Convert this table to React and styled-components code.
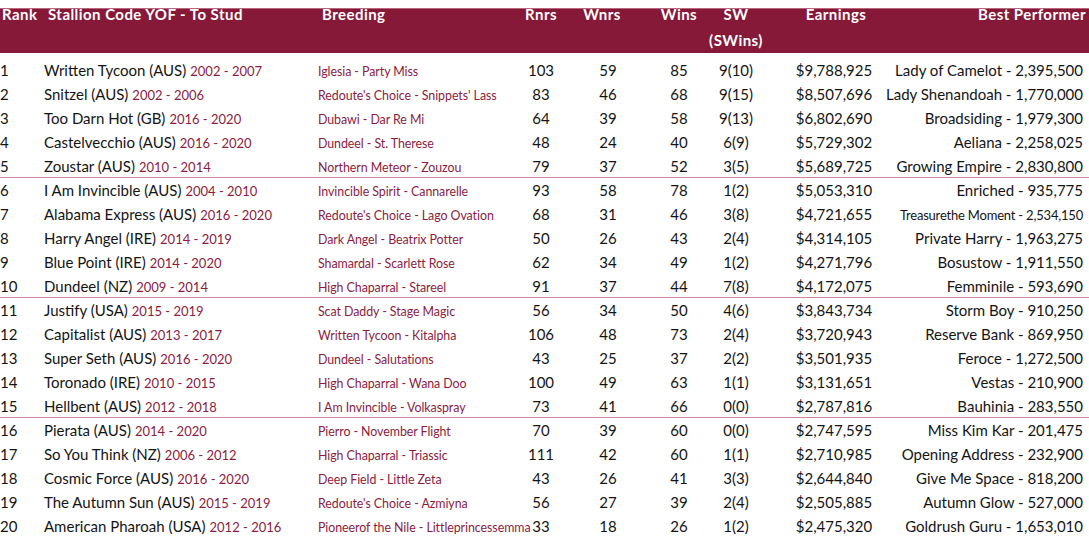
import styled, { createGlobalStyle } from "styled-components";

const GlobalStyle = createGlobalStyle`
  html, body {
    margin: 0;
    padding: 0;
    background: #ffffff;
  }
  body {
    font-family: "Lato", "Liberation Sans", sans-serif;
    color: #141414;
  }
`;

const stallions = [
  ["Written Tycoon (AUS)", "2002 - 2007", "Iglesia - Party Miss", 103, 59, 85, "9(10)", "$9,788,925", "Lady of Camelot - 2,395,500"],
  ["Snitzel (AUS)", "2002 - 2006", "Redoute's Choice - Snippets' Lass", 83, 46, 68, "9(15)", "$8,507,696", "Lady Shenandoah - 1,770,000"],
  ["Too Darn Hot (GB)", "2016 - 2020", "Dubawi - Dar Re Mi", 64, 39, 58, "9(13)", "$6,802,690", "Broadsiding - 1,979,300"],
  ["Castelvecchio (AUS)", "2016 - 2020", "Dundeel - St. Therese", 48, 24, 40, "6(9)", "$5,729,302", "Aeliana - 2,258,025"],
  ["Zoustar (AUS)", "2010 - 2014", "Northern Meteor - Zouzou", 79, 37, 52, "3(5)", "$5,689,725", "Growing Empire - 2,830,800"],
  ["I Am Invincible (AUS)", "2004 - 2010", "Invincible Spirit - Cannarelle", 93, 58, 78, "1(2)", "$5,053,310", "Enriched - 935,775"],
  ["Alabama Express (AUS)", "2016 - 2020", "Redoute's Choice - Lago Ovation", 68, 31, 46, "3(8)", "$4,721,655", "Treasurethe Moment - 2,534,150", true],
  ["Harry Angel (IRE)", "2014 - 2019", "Dark Angel - Beatrix Potter", 50, 26, 43, "2(4)", "$4,314,105", "Private Harry - 1,963,275"],
  ["Blue Point (IRE)", "2014 - 2020", "Shamardal - Scarlett Rose", 62, 34, 49, "1(2)", "$4,271,796", "Bosustow - 1,911,550"],
  ["Dundeel (NZ)", "2009 - 2014", "High Chaparral - Stareel", 91, 37, 44, "7(8)", "$4,172,075", "Femminile - 593,690"],
  ["Justify (USA)", "2015 - 2019", "Scat Daddy - Stage Magic", 56, 34, 50, "4(6)", "$3,843,734", "Storm Boy - 910,250"],
  ["Capitalist (AUS)", "2013 - 2017", "Written Tycoon - Kitalpha", 106, 48, 73, "2(4)", "$3,720,943", "Reserve Bank - 869,950"],
  ["Super Seth (AUS)", "2016 - 2020", "Dundeel - Salutations", 43, 25, 37, "2(2)", "$3,501,935", "Feroce - 1,272,500"],
  ["Toronado (IRE)", "2010 - 2015", "High Chaparral - Wana Doo", 100, 49, 63, "1(1)", "$3,131,651", "Vestas - 210,900"],
  ["Hellbent (AUS)", "2012 - 2018", "I Am Invincible - Volkaspray", 73, 41, 66, "0(0)", "$2,787,816", "Bauhinia - 283,550"],
  ["Pierata (AUS)", "2014 - 2020", "Pierro - November Flight", 70, 39, 60, "0(0)", "$2,747,595", "Miss Kim Kar - 201,475"],
  ["So You Think (NZ)", "2006 - 2012", "High Chaparral - Triassic", 111, 42, 60, "1(1)", "$2,710,985", "Opening Address - 232,900"],
  ["Cosmic Force (AUS)", "2016 - 2020", "Deep Field - Little Zeta", 43, 26, 41, "3(3)", "$2,644,840", "Give Me Space - 818,200"],
  ["The Autumn Sun (AUS)", "2015 - 2019", "Redoute's Choice - Azmiyna", 56, 27, 39, "2(4)", "$2,505,885", "Autumn Glow - 527,000"],
  ["American Pharoah (USA)", "2012 - 2016", "Pioneerof the Nile - Littleprincessemma", 33, 18, 26, "1(2)", "$2,475,320", "Goldrush Guru - 1,653,010"],
];

// rank | stallion | breeding | rnrs | wnrs | wins | sw | earnings | best performer
const COLUMNS = "44px 274px 200px 46px 88px 54px 60px 136px 187px";

const Page = styled.div`
  width: 1089px;
  padding-top: 8px;
`;

const HeaderBand = styled.div`
  height: 45px;
  box-sizing: border-box;
  background: #861838;
  border-top: 1px solid #b9667d;
`;

const HeaderGrid = styled.div`
  display: grid;
  grid-template-columns: ${COLUMNS};
  margin-top: -8px;
  color: #ffffff;
  font-weight: 700;
  font-size: 15px;
  letter-spacing: 0.45px;
  line-height: 26px;
  white-space: nowrap;
`;

const HeadCell = styled.div`
  display: flex;
  flex-direction: column;
  align-items: ${(p) => p.$align || "center"};
  padding-left: ${(p) => p.$pad || 0}px;
  padding-right: ${(p) => p.$padRight || 0}px;
`;

const Body = styled.div`
  padding-top: 5px;
`;

const Row = styled.div`
  display: grid;
  grid-template-columns: ${COLUMNS};
  height: 24px;
  box-sizing: border-box;
  padding-top: 3px;
  align-items: baseline;
  white-space: nowrap;
  font-size: 15px;
  line-height: 18px;
  border-bottom: 1px solid ${(p) => (p.$divider ? "#cc8799" : "transparent")};
`;

const Cell = styled.div`
  display: flex;
  align-items: baseline;
  justify-content: ${(p) => p.$justify || "center"};
  padding-right: ${(p) => p.$padRight || 0}px;
`;

const Name = styled.span`
  color: #141414;
`;

const Years = styled.span`
  color: #8a1c40;
  font-size: 13px;
  margin-left: 4px;
`;

const Breeding = styled.span`
  color: #8a1c40;
  font-size: 12.4px;
  letter-spacing: -0.06px;
`;

const Performer = styled.span`
  font-size: ${(p) => (p.$small ? "13px" : "15px")};
  letter-spacing: ${(p) => (p.$small ? "-0.2px" : "0")};
`;

export default function App() {
  return (
    <Page>
      <GlobalStyle />
      <HeaderBand>
        <HeaderGrid>
          <HeadCell $align="flex-start" $pad={2}>Rank</HeadCell>
          <HeadCell $align="flex-start" $pad={4}>Stallion Code YOF - To Stud</HeadCell>
          <HeadCell $align="flex-start" $pad={4}>Breeding</HeadCell>
          <HeadCell>Rnrs</HeadCell>
          <HeadCell $padRight={12}>Wnrs</HeadCell>
          <HeadCell>Wins</HeadCell>
          <HeadCell>
            <span>SW</span>
            <span>(SWins)</span>
          </HeadCell>
          <HeadCell $pad={4}>Earnings</HeadCell>
          <HeadCell $align="flex-end" $padRight={3}>Best Performer</HeadCell>
        </HeaderGrid>
      </HeaderBand>
      <Body>
        {stallions.map((s, i) => (
          <Row key={s[0]} $divider={i === 4 || i === 9 || i === 14}>
            <Cell $justify="flex-start">{i + 1}</Cell>
            <Cell $justify="flex-start">
              <Name>{s[0]}</Name>
              <Years>{s[1]}</Years>
            </Cell>
            <Cell $justify="flex-start">
              <Breeding>{s[2]}</Breeding>
            </Cell>
            <Cell>{s[3]}</Cell>
            <Cell>{s[4]}</Cell>
            <Cell>{s[5]}</Cell>
            <Cell>{s[6]}</Cell>
            <Cell>{s[7]}</Cell>
            <Cell $justify="flex-end" $padRight={6}>
              <Performer $small={s[9]}>{s[8]}</Performer>
            </Cell>
          </Row>
        ))}
      </Body>
    </Page>
  );
}
